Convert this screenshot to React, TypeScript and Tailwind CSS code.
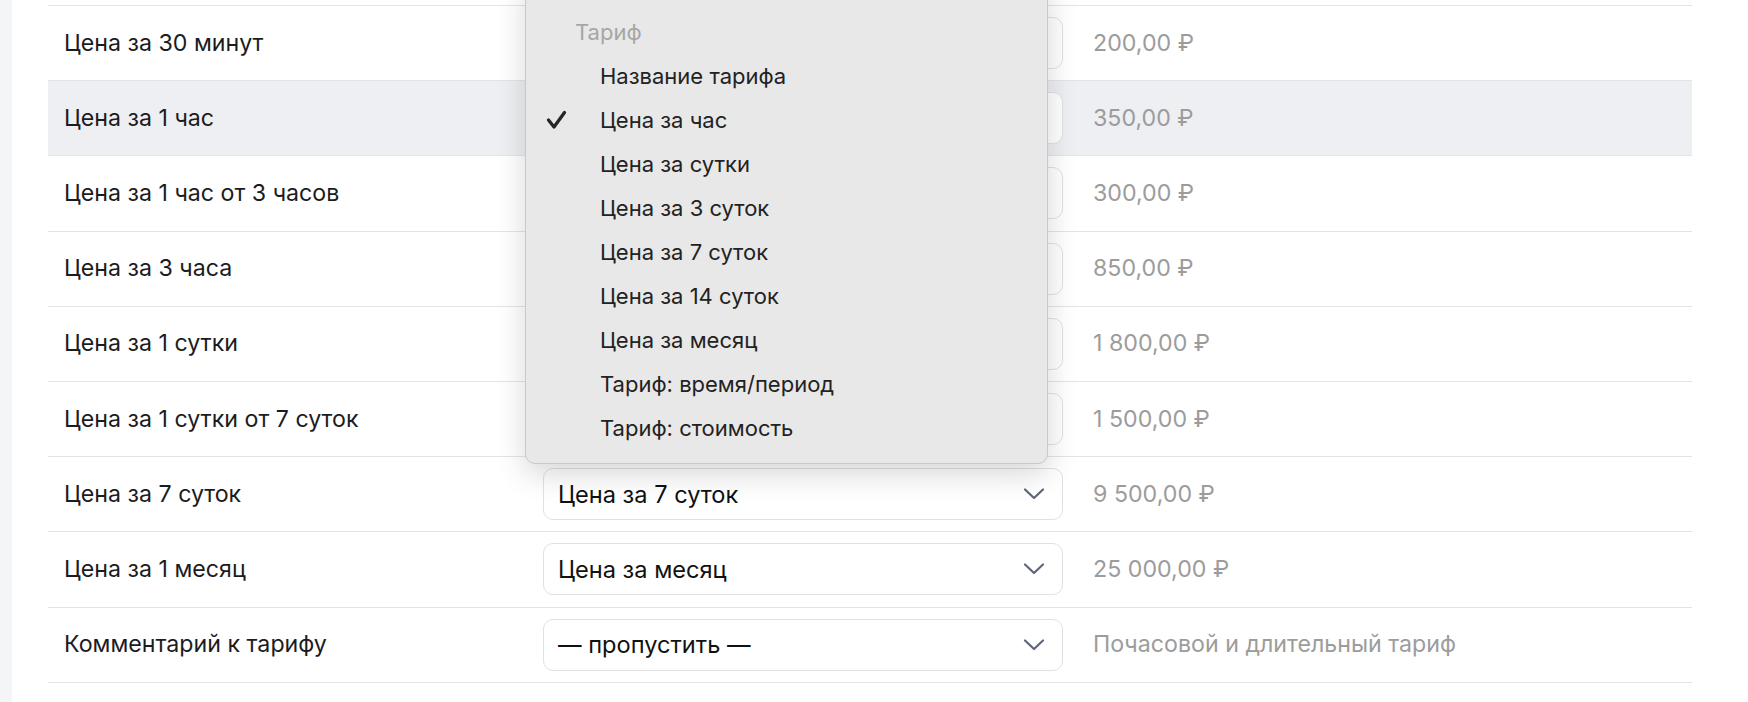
import { Fragment } from "react";

interface Row {
  label: string;
  field: string;
  value: string;
}

const rows: Row[] = [
  { label: "Цена за 30 минут", field: "Цена за 30 минут", value: "200,00 ₽" },
  { label: "Цена за 1 час", field: "Цена за час", value: "350,00 ₽" },
  { label: "Цена за 1 час от 3 часов", field: "Цена за час", value: "300,00 ₽" },
  { label: "Цена за 3 часа", field: "Цена за час", value: "850,00 ₽" },
  { label: "Цена за 1 сутки", field: "Цена за сутки", value: "1 800,00 ₽" },
  { label: "Цена за 1 сутки от 7 суток", field: "Цена за сутки", value: "1 500,00 ₽" },
  { label: "Цена за 7 суток", field: "Цена за 7 суток", value: "9 500,00 ₽" },
  { label: "Цена за 1 месяц", field: "Цена за месяц", value: "25 000,00 ₽" },
  { label: "Комментарий к тарифу", field: "— пропустить —", value: "Почасовой и длительный тариф" },
];

const options = [
  "Название тарифа",
  "Цена за час",
  "Цена за сутки",
  "Цена за 3 суток",
  "Цена за 7 суток",
  "Цена за 14 суток",
  "Цена за месяц",
  "Тариф: время/период",
  "Тариф: стоимость",
];

const selected = "Цена за час";

function Chevron() {
  return (
    <svg width="22" height="12" viewBox="0 0 22 12" fill="none" className="shrink-0">
      <path d="M2 1.5 L11 10 L20 1.5" stroke="#5d6779" strokeWidth="2.2" strokeLinecap="round" strokeLinejoin="round" />
    </svg>
  );
}

function Check() {
  return (
    <svg width="21" height="20" viewBox="0 0 21 20" fill="none">
      <path d="M2.5 10 L8 17 L18.5 2.5" stroke="#262626" strokeWidth="3.3" strokeLinecap="round" strokeLinejoin="round" />
    </svg>
  );
}

export default function App() {
  return (
    <div className="flex h-[702px] w-[1748px] overflow-hidden bg-[#f4f5f7] font-['Inter','Noto_Sans',sans-serif]">
      <div className="w-[12px] shrink-0" />
      <div className="flex-1 bg-white pl-[36px] pr-[56px] pt-[5px]">
        <div className="relative border-t border-[#e4e4e6]">
          {rows.map((row, i) => (
            <div
              key={row.label}
              className={`flex h-[75.2px] items-center border-b border-[#e4e4e6] ${i === 1 ? "bg-[#eeeff2]" : ""}`}
            >
              <div className="w-[495px] shrink-0 pl-[16px] text-[23.2px] text-[#1c1c1e]">{row.label}</div>
              <div className="flex h-[52px] w-[520px] shrink-0 items-center justify-between rounded-[10px] border border-[#dfe1e5] bg-white pl-[14px] pr-[17px] text-[23.6px] text-[#111]">
                <span>{row.field}</span>
                <Chevron />
              </div>
              <div className="pl-[30px] text-[23.2px] text-[#9c9c9c]">{row.value}</div>
            </div>
          ))}

          {/* open tariff dropdown */}
          <div className="absolute left-[477px] top-[-29px] w-[523px] rounded-[10px] border border-[#c9c9c9] bg-[#e8e8e8] pb-[13px] pt-[32px] shadow-[0_10px_30px_rgba(0,0,0,0.16)]">
            <div className="flex h-[44px] items-center pl-[49px] text-[22px] text-[#a6a6a6]">Тариф</div>
            {options.map((opt) => (
              <Fragment key={opt}>
                <div className="flex h-[44px] items-center text-[22px] text-[#222]">
                  <div className="flex w-[74px] justify-end pr-[33px]">{opt === selected && <Check />}</div>
                  <span>{opt}</span>
                </div>
              </Fragment>
            ))}
          </div>
        </div>
      </div>
    </div>
  );
}
